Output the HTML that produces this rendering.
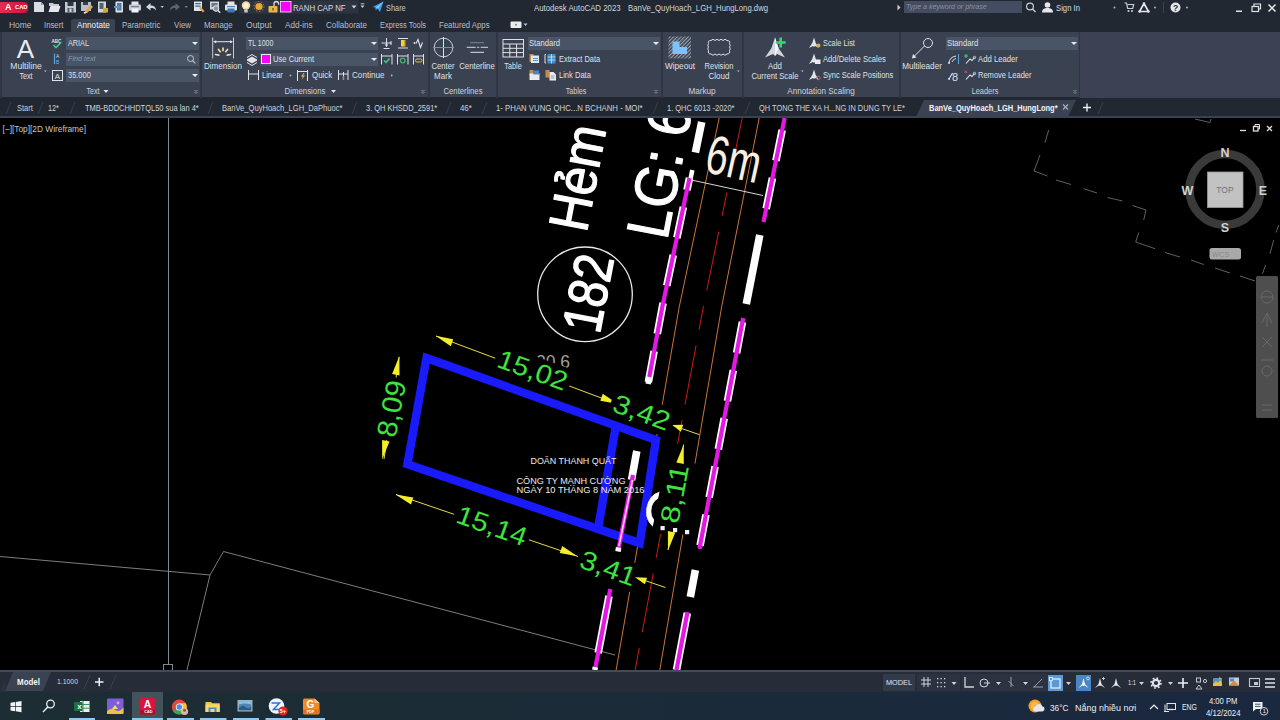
<!DOCTYPE html>
<html lang="vi">
<head>
<meta charset="utf-8">
<title>Autodesk AutoCAD 2023 - BanVe_QuyHoach_LGH_HungLong.dwg</title>
<style>
html,body{margin:0;padding:0;background:#000;}
body{width:1280px;height:720px;position:relative;overflow:hidden;font-family:"Liberation Sans",sans-serif;font-size:8.5px;color:#d4d8e0;}
.abs,.t,.b{position:absolute;}
.t{white-space:nowrap;line-height:10px;height:10px;}
.c{transform:translateX(-50%);text-align:center;}
#titlebar{left:0;top:0;width:1280px;height:17px;background:#222832;}
#menurow{left:0;top:17px;width:1280px;height:15px;background:#222832;}
#ribbon{left:0;top:32px;width:1280px;height:65.500px;background:#3a4151;}
.panel{position:absolute;top:32px;height:66px;background:#3b4252;}
.sep{position:absolute;top:32px;height:65.500px;width:2px;background:#2f3542;}
.dd{position:absolute;height:13px;background:#4a5467;}
.dd i{position:absolute;right:1.500px;top:5px;width:0;height:0;border-left:3px solid transparent;border-right:3px solid transparent;border-top:3px solid #e8ebf0;}
#filetabs{left:0;top:97px;width:1280px;height:20px;background:#222832;}
#canvas{left:0;top:118px;width:1280px;height:552px;background:#000;}
#statusbar{left:0;top:669.500px;width:1280px;height:22.500px;background:#262c38;border-top:2px solid #434b5b;box-sizing:border-box;}
#taskbar{left:0;top:692px;width:1280px;height:28px;background:linear-gradient(90deg,#1d2d34 0%,#1c2c35 30%,#1b2a3a 60%,#1a2840 100%);}
.mt{top:20px;font-size:8.5px;color:#b9bec9;}
.ft{top:102.500px;font-size:8.700px;color:#cfd3db;}
.pt{top:86px;font-size:8.5px;color:#d0d4dc;}
.lb{font-size:8.5px;color:#dfe2e8;}
.sl{position:absolute;width:1px;height:13px;background:#414857;transform:skewX(-25deg);top:101px;}
</style>
</head>
<body>
<!-- ===== TITLE BAR ===== -->
<div id="titlebar" class="abs"></div>
<div id="menurow" class="abs"></div>
<div id="ribbon" class="abs"></div>
<div id="filetabs" class="abs"></div>
<div id="canvas" class="abs"></div>
<div id="statusbar" class="abs"></div>
<div id="taskbar" class="abs"></div>
<!--TITLE-->
<div class="abs" style="left:0;top:1.500px;width:27.500px;height:11.500px;background:linear-gradient(90deg,#ea2a52,#c9143c);border-radius:0 4px 4px 0;"></div>
<div class="t" style="left:5px;top:2px;font-size:9px;line-height:10px;height:10px;font-weight:bold;color:#fff;">A</div>
<div class="t" style="left:15px;top:3.800px;font-size:5.800px;line-height:7px;height:7px;font-weight:bold;color:#fff;">CAD</div>
<svg class="abs" style="left:0;top:-.7px" width="420" height="17" viewBox="0 0 420 17">
 <!-- new -->
 <path d="M34 3h7l3 3v7h-10z" fill="#d9dce2"/><path d="M41 3v3h3" fill="#9aa0ab"/>
 <!-- open -->
 <path d="M49 4h4l1 1h5v2h-10z" fill="#c9ccd2"/><path d="M48.5 13l2-6h10l-2 6z" fill="#e4e6ea"/>
 <!-- save -->
 <rect x="65" y="3" width="11" height="10.5" fill="#c4c8cf"/><rect x="67.5" y="3" width="6" height="4" fill="#30363f"/><rect x="67.5" y="9" width="6" height="4.5" fill="#585f6b"/><rect x="69.5" y="9.5" width="2" height="3.5" fill="#d9dce2"/>
 <!-- saveas -->
 <rect x="81" y="3" width="10" height="9" fill="#b9bdc5"/><rect x="83" y="3" width="5" height="3" fill="#3a404a"/><path d="M85 12l6-6 2 2-6 6-3 .8z" fill="#e0a34c"/><path d="M84 13l3 .8-3.3.6z" fill="#fff"/>
 <!-- import -->
 <path d="M98 2.5h8v11h-8z" fill="#d0d3d9"/><rect x="99.500" y="4" width="4" height="6" fill="#59606c"/><rect x="103" y="9" width="5" height="4.500" fill="#d8a630"/>
 <!-- mobile -->
 <rect x="115.500" y="2.500" width="7.500" height="11" rx="1" fill="#dfe2e7"/><rect x="117" y="4" width="4.500" height="7.500" fill="#58798f"/><path d="M114 7h4v-1.500l2.500 2.500-2.500 2.500v-1.500h-4z" fill="#4c9ad6"/>
 <!-- print -->
 <rect x="131.500" y="2.500" width="7" height="4" fill="#e4e6ea"/><rect x="129" y="5.500" width="12" height="6" rx="1" fill="#c9ccd2"/><rect x="131.500" y="9.500" width="7" height="4" fill="#f2f3f5"/><rect x="131" y="7" width="8" height="1.200" fill="#5c87ab"/>
 <!-- undo -->
 <path d="M146 8l4.500-4v2.500c3.500 0 5.500 1.500 5.500 5-1.200-2-2.800-2.500-5.500-2.500v2.500z" fill="#d3d6dc"/>
 <path d="M160.500 7h3.400l-1.700 2z" fill="#c4c8cf"/>
 <!-- redo -->
 <path d="M180 8l-4.500-4v2.500c-3.500 0-5.500 1.500-5.500 5 1.200-2 2.800-2.500 5.500-2.500v2.500z" fill="#5d636f"/>
 <path d="M184.500 7h3.400l-1.700 2z" fill="#7a808c"/>
 <!-- batch plot -->
 <rect x="194" y="2.500" width="8" height="9.500" fill="#dfe2e7"/><rect x="195.200" y="4" width="5.500" height="1.300" fill="#4a6f94"/><rect x="195.200" y="6.500" width="5.500" height="1.300" fill="#4a6f94"/><path d="M199 9l4 4.500 1.500-1.500-4-4.500z" fill="#e0a34c"/>
 <!-- plot preview -->
 <rect x="210" y="2.500" width="9" height="8" fill="#d0d3d9"/><rect x="211.500" y="4" width="6" height="4" fill="#6e7785"/><circle cx="216" cy="9.500" r="2.800" fill="#8b94a3" stroke="#e6e8ec" stroke-width="1"/><path d="M218 11.500l2.200 2.200" stroke="#e6e8ec" stroke-width="1.400"/>
 <!-- plot -->
 <rect x="227.500" y="2.500" width="7" height="4" fill="#e4e6ea"/><rect x="225" y="5.500" width="12" height="6" rx="1" fill="#dde0e5"/><rect x="227.500" y="9.500" width="7" height="4" fill="#3d78b0"/><rect x="227" y="7" width="8" height="1.200" fill="#4e86b8"/>
 <rect x="239" y="1.500" width="119.500" height="13" fill="#2d3441"/>
 <!-- bulb -->
 <circle cx="246" cy="6.500" r="4.200" fill="#f2d8a0"/><circle cx="246" cy="6.500" r="2.500" fill="#fff3d0"/><rect x="244.300" y="10.500" width="3.400" height="3" fill="#c9ccd2"/>
 <!-- sun -->
 <circle cx="259" cy="7.500" r="3.600" fill="#eaa83a"/><circle cx="259" cy="7.500" r="5" fill="none" stroke="#b98733" stroke-width="1" stroke-dasharray="1.500 1.600"/>
 <!-- lock -->
 <rect x="268.500" y="7" width="9" height="6.500" rx=".8" fill="#e8b54a"/><path d="M274 7v-2.200a2.300 2.300 0 0 1 4.600 0v1" fill="none" stroke="#d8dbe0" stroke-width="1.300"/><rect x="272.300" y="9" width="1.500" height="2.500" fill="#7a5a1c"/>
 <!-- layer box -->
 
 <rect x="280.500" y="2.500" width="10.500" height="10.500" fill="#ff00ff" stroke="#e9e9ef" stroke-width=".8"/>
 <path d="M351.500 6.500h5l-2.500 3z" fill="#d0d3d9"/>
 <path d="M360.500 6.500h4l-2 2.500z" fill="#c4c8cf"/><rect x="360.700" y="4.300" width="3.600" height="1" fill="#c4c8cf"/>
 <!-- share -->
 <path d="M372.500 8l11-5.500-3.500 10.500-2.500-3.500-2 2v-3z" fill="#3a9be8"/><path d="M375.500 8.500l8-6-5.500 7z" fill="#8fc8f5"/>
</svg>
<div class="t" style="transform-origin:0 50%;transform:scaleX(0.914);left:293px;top:3px;font-size:8.500px;color:#d8dbe2;">RANH CAP NF</div>
<div class="t" style="transform-origin:0 50%;transform:scaleX(0.868);left:386px;top:3px;font-size:8.500px;color:#c5cad3;">Share</div>
<div class="t" style="transform-origin:0 50%;transform:scaleX(0.921);left:534px;top:3px;font-size:8.500px;color:#d3d6dd;">Autodesk AutoCAD 2023</div>
<div class="t" style="transform-origin:0 50%;transform:scaleX(0.909);left:628px;top:3px;font-size:8.500px;color:#d3d6dd;">BanVe_QuyHoach_LGH_HungLong.dwg</div>
<div class="abs" style="left:904px;top:1px;width:118px;height:12px;background:#434c60;"></div>
<div class="t" style="transform-origin:0 50%;transform:scaleX(0.877);left:906px;top:2px;font-size:8px;font-style:italic;color:#8a93a4;">Type a keyword or phrase</div>
<svg class="abs" style="left:890px;top:0" width="390" height="17" viewBox="890 0 390 17">
 <path d="M897.500 4.500v6l3-3z" fill="#c9ccd2"/>
 <circle cx="1030" cy="6.500" r="3.400" fill="none" stroke="#c9ccd2" stroke-width="1.200"/><path d="M1032.500 9l3 3" stroke="#c9ccd2" stroke-width="1.400"/>
 <circle cx="1047.500" cy="5" r="2.800" fill="#e4e6ea"/><path d="M1042 12.500c0-3.500 2.500-4.500 5.500-4.500s5.500 1 5.500 4.500z" fill="#e4e6ea"/>
 <circle cx="1114.500" cy="7.500" r="1" fill="#aeb3bd"/>
 <path d="M1124.500 3h2l1.200 5.500h5l1-4h-6" fill="none" stroke="#c9ccd2" stroke-width="1.200"/><circle cx="1128.500" cy="11" r="1.100" fill="#c9ccd2"/><circle cx="1132" cy="11" r="1.100" fill="#c9ccd2"/>
 <path d="M1144 3.500l4.500 8h-9z" fill="none" stroke="#e4e6ea" stroke-width="1.600" stroke-linejoin="round"/><circle cx="1144" cy="3.500" r="1.200" fill="#e4e6ea"/><circle cx="1139.500" cy="11.500" r="1.200" fill="#e4e6ea"/><circle cx="1148.500" cy="11.500" r="1.200" fill="#e4e6ea"/>
 <circle cx="1155" cy="7.500" r="1" fill="#aeb3bd"/>
 <rect x="1163" y="2" width="1" height="11" fill="#3b4250"/>
 <circle cx="1175.500" cy="7.500" r="5" fill="#e4e6ea"/>
 <circle cx="1187" cy="7.500" r="1" fill="#aeb3bd"/>
 <rect x="1236" y="10.500" width="6" height="1.500" fill="#dfe2e7"/>
 <rect x="1252" y="6.500" width="6.500" height="5" fill="none" stroke="#dfe2e7" stroke-width="1.200"/><path d="M1254 6v-2h6.500v5h-2" fill="none" stroke="#dfe2e7" stroke-width="1.200"/>
 <path d="M1268.500 4.500l7 7m0-7l-7 7" stroke="#e9ebee" stroke-width="1.500"/>
</svg>
<div class="t" style="left:1173px;top:3px;font-size:8.500px;font-weight:bold;color:#222832;">?</div>
<div class="t" style="transform-origin:0 50%;transform:scaleX(0.907);left:1056px;top:3px;font-size:8.500px;color:#d8dbe2;">Sign In</div>
<!--MENU-->
<div class="abs" style="left:71px;top:19px;width:44px;height:14px;background:#3b4252;border-radius:2px 2px 0 0;"></div>
<div class="t mt" style="transform-origin:0 50%;transform:scaleX(0.992);left:9px;">Home</div>
<div class="t mt" style="transform-origin:0 50%;transform:scaleX(0.912);left:44px;">Insert</div>
<div class="t mt" style="transform-origin:0 50%;transform:scaleX(0.964);left:77px;color:#f0f2f5;">Annotate</div>
<div class="t mt" style="transform-origin:0 50%;transform:scaleX(0.934);left:122px;">Parametric</div>
<div class="t mt" style="transform-origin:0 50%;transform:scaleX(0.930);left:174px;">View</div>
<div class="t mt" style="transform-origin:0 50%;transform:scaleX(0.931);left:204px;">Manage</div>
<div class="t mt" style="transform-origin:0 50%;transform:scaleX(1.003);left:246px;">Output</div>
<div class="t mt" style="transform-origin:0 50%;transform:scaleX(0.961);left:285px;">Add-ins</div>
<div class="t mt" style="transform-origin:0 50%;transform:scaleX(0.943);left:326px;">Collaborate</div>
<div class="t mt" style="transform-origin:0 50%;transform:scaleX(0.872);left:380px;">Express Tools</div>
<div class="t mt" style="transform-origin:0 50%;transform:scaleX(0.915);left:439px;">Featured Apps</div>
<svg class="abs" style="left:505px;top:17px" width="30" height="15" viewBox="505 17 30 15">
 <rect x="510.500" y="21.500" width="11" height="6.500" rx="1" fill="#e9ebee"/><circle cx="516" cy="24.700" r="1" fill="#7a808c"/>
 <path d="M523.500 23.500h4l-2 2.500z" fill="#c4c8cf"/>
</svg>
<!--RIBBON-->
<div class="abs" style="left:0;top:32px;width:2px;height:65.500px;background:#2f3542;"></div>
<div class="sep" style="left:200px;"></div>
<div class="sep" style="left:428px;"></div>
<div class="sep" style="left:496px;"></div>
<div class="sep" style="left:661px;"></div>
<div class="sep" style="left:742px;"></div>
<div class="sep" style="left:899px;"></div>
<div class="sep" style="left:1079px;width:1px;"></div>
<div class="abs" style="left:1080px;top:32px;width:200px;height:65.500px;background:#3c4254;"></div>
<!-- dropdowns -->
<div class="dd" style="left:66px;top:37px;width:133px;"><i></i></div>
<div class="dd" style="left:66px;top:53px;width:133px;"></div>
<div class="dd" style="left:66px;top:69px;width:133px;"><i></i></div>
<div class="dd" style="left:246px;top:37px;width:132px;"><i></i></div>
<div class="dd" style="left:260px;top:53px;width:118px;"><i></i></div>
<div class="dd" style="left:528px;top:37px;width:132px;"><i></i></div>
<div class="dd" style="left:946px;top:37px;width:132px;"><i></i></div>
<!-- TEXT panel -->
<div class="t" style="left:16.800px;top:34.600px;font-size:26px;line-height:28px;height:28px;color:#e9ebee;">A</div>
<div class="t lb c" style="transform:translateX(-50%) scaleX(1.004);left:26px;top:61px;">Multiline</div>
<div class="t lb c" style="transform:translateX(-50%) scaleX(0.840);left:26px;top:71px;">Text</div>
<div class="t lb" style="transform-origin:0 50%;transform:scaleX(0.854);left:68px;top:38px;">ARIAL</div>
<div class="t" style="transform-origin:0 50%;transform:scaleX(0.899);left:68px;top:54px;font-size:8px;font-style:italic;color:#8d96a6;">Find text</div>
<div class="t lb" style="transform-origin:0 50%;transform:scaleX(0.877);left:68px;top:70px;">35.000</div>
<div class="t pt c" style="transform:translateX(-50%) scaleX(0.834);left:93px;">Text</div>
<!-- DIMENSIONS panel -->
<div class="t lb c" style="transform:translateX(-50%) scaleX(0.946);left:223px;top:61px;">Dimension</div>
<div class="t lb" style="transform-origin:0 50%;transform:scaleX(0.819);left:248px;top:38px;">TL 1000</div>
<div class="abs" style="left:261px;top:54px;width:9.500px;height:9.500px;background:#ff00ff;border:.8px solid #e9e9ef;box-sizing:border-box;"></div>
<div class="t lb" style="transform-origin:0 50%;transform:scaleX(0.899);left:273px;top:54px;">Use Current</div>
<div class="t lb" style="transform-origin:0 50%;transform:scaleX(0.880);left:262px;top:70px;">Linear</div>
<div class="t lb" style="transform-origin:0 50%;transform:scaleX(0.934);left:312px;top:70px;">Quick</div>
<div class="t lb" style="transform-origin:0 50%;transform:scaleX(0.955);left:352px;top:70px;">Continue</div>
<div class="t pt c" style="transform:translateX(-50%) scaleX(0.923);left:305px;">Dimensions</div>
<!-- CENTERLINES -->
<div class="t lb c" style="transform:translateX(-50%) scaleX(0.901);left:443px;top:61px;">Center</div>
<div class="t lb c" style="transform:translateX(-50%) scaleX(0.942);left:443px;top:71px;">Mark</div>
<div class="t lb c" style="transform:translateX(-50%) scaleX(0.919);left:477px;top:61px;">Centerline</div>
<div class="t pt c" style="transform:translateX(-50%) scaleX(0.907);left:463px;">Centerlines</div>
<!-- TABLES -->
<div class="t lb c" style="transform:translateX(-50%) scaleX(0.856);left:513px;top:61px;">Table</div>
<div class="t lb" style="transform-origin:0 50%;transform:scaleX(0.899);left:529px;top:38px;">Standard</div>
<div class="t lb" style="transform-origin:0 50%;transform:scaleX(0.881);left:559px;top:54px;">Extract Data</div>
<div class="t lb" style="transform-origin:0 50%;transform:scaleX(0.888);left:559px;top:70px;">Link Data</div>
<div class="t pt c" style="transform:translateX(-50%) scaleX(0.838);left:576px;">Tables</div>
<!-- MARKUP -->
<div class="t lb c" style="transform:translateX(-50%) scaleX(0.962);left:680px;top:61px;">Wipeout</div>
<div class="t lb c" style="transform:translateX(-50%) scaleX(0.889);left:719px;top:61px;">Revision</div>
<div class="t lb c" style="transform:translateX(-50%) scaleX(0.945);left:719px;top:71px;">Cloud</div>
<div class="t pt c" style="transform:translateX(-50%) scaleX(0.960);left:702px;">Markup</div>
<!-- ANNOTATION SCALING -->
<div class="t lb c" style="transform:translateX(-50%) scaleX(0.926);left:775px;top:61px;">Add</div>
<div class="t lb c" style="transform:translateX(-50%) scaleX(0.902);left:775px;top:71px;">Current Scale</div>
<div class="t lb" style="transform-origin:0 50%;transform:scaleX(0.865);left:823px;top:38px;">Scale List</div>
<div class="t lb" style="transform-origin:0 50%;transform:scaleX(0.898);left:823px;top:54px;">Add/Delete Scales</div>
<div class="t lb" style="transform-origin:0 50%;transform:scaleX(0.886);left:823px;top:70px;">Sync Scale Positions</div>
<div class="t pt c" style="transform:translateX(-50%) scaleX(0.952);left:821px;">Annotation Scaling</div>
<!-- LEADERS -->
<div class="t lb c" style="transform:translateX(-50%) scaleX(0.955);left:922px;top:61px;">Multileader</div>
<div class="t lb" style="transform-origin:0 50%;transform:scaleX(0.910);left:947px;top:38px;">Standard</div>
<div class="t lb" style="transform-origin:0 50%;transform:scaleX(0.908);left:978px;top:54px;">Add Leader</div>
<div class="t lb" style="transform-origin:0 50%;transform:scaleX(0.885);left:978px;top:70px;">Remove Leader</div>
<div class="t pt c" style="transform:translateX(-50%) scaleX(0.869);left:985px;">Leaders</div>
<svg class="abs" style="left:0;top:32px" width="1280" height="66" viewBox="0 32 1280 66">
 <!-- text panel icons -->
 <text x="51.500" y="42.500" font-size="4.500" font-weight="bold" fill="#e4e6ea" font-family="Liberation Sans, sans-serif">ABC</text>
 <path d="M53.500 45l2.500 2.500 5-5" fill="none" stroke="#3fcf8e" stroke-width="1.600"/>
 <path d="M54.500 53.500v10.500" stroke="#5aa7e0" stroke-width="1.200"/><text x="56" y="58" font-size="5" fill="#c9d4e4" font-family="Liberation Sans, sans-serif">A</text><text x="56" y="63.500" font-size="5" fill="#6fb0e6" font-family="Liberation Sans, sans-serif">B</text>
 <rect x="52.500" y="70.500" width="10" height="10" fill="none" stroke="#dfe2e7" stroke-width="1"/><text x="54.700" y="79" font-size="8" fill="#dfe2e7" font-family="Liberation Sans, sans-serif">A</text>
 <circle cx="190.500" cy="58.500" r="3" fill="none" stroke="#c4c8cf" stroke-width="1"/><path d="M192.700 60.700l2.600 2.600" stroke="#c4c8cf" stroke-width="1.200"/>
 <path d="M44 70.500h2.600l-1.300 1.600z" fill="#c4c8cf"/>
 <path d="M103.500 90h5l-2.500 3z" fill="#e4e6ea"/>
 <path d="M194.500 90l1.500 1.500 1.500-1.500M194.500 92l1.500 1.500 1.500-1.500" fill="none" stroke="#9aa0ab" stroke-width=".8"/>
 <!-- dimension big icon -->
 <path d="M212.700 37.500v21M233.500 37.500v21" stroke="#c9ccd2" stroke-width="1"/>
 <path d="M214 41.700h18" stroke="#e4e6ea" stroke-width="1"/><path d="M213.200 41.700l3-1.500v3zM233 41.700l-3-1.500v3z" fill="#e4e6ea"/>
 <g stroke="#e9dfa6" stroke-width="1.700" stroke-linecap="round"><path d="M223 48v2.500M218.500 49.500l1.800 2.200M227.500 49.500l-1.800 2.200M215.500 54.500l3.300.6M230.500 54.500l-3.300.6"/></g>
 <!-- layers icon -->
 <path d="M247 60l5-3 5 3-5 3zM247 62.500l5 3 5-3M247 57.500l5-3 5 3" fill="none" stroke="#e4e6ea" stroke-width="1"/><path d="M247 60l5-3 5 3-5 3z" fill="#e4e6ea"/>
 <!-- linear -->
 <path d="M248.500 70v10M258.500 70v10M248.500 74h10" stroke="#dfe2e7" stroke-width="1"/>
 <circle cx="290.500" cy="75.500" r=".9" fill="#aeb3bd"/>
 <!-- quick -->
 <path d="M297.500 70v11M307.500 70v11M297.500 71.500h10" stroke="#dfe2e7" stroke-width="1"/><path d="M303.500 73l-2.500 3.500h2l-1.500 3.500 3.500-4.500h-2l1.500-2.500z" fill="#f0b45a"/>
 <!-- continue -->
 <path d="M338.500 70v10M343.500 72v8M348 70v10M338.500 74h9.500" stroke="#dfe2e7" stroke-width="1"/><path d="M343.500 76v4" stroke="#8d96a6" stroke-width="1.500"/>
 <circle cx="391.700" cy="75.500" r=".9" fill="#aeb3bd"/>
 <!-- small dim icons row1 -->
 <path d="M381.500 43h10M386.500 38v8.500M383.500 48.500h6" stroke="#dfe2e7" stroke-width="1"/><path d="M386.500 47l-1.800-2.500h3.600z" fill="#dfe2e7"/><path d="M391 41v4" stroke="#dfe2e7" stroke-width="1"/>
 <path d="M398 38.500h10M398 48h10" stroke="#dfe2e7" stroke-width="1.200"/><rect x="401" y="40" width="3.800" height="6.500" fill="#f2d23a"/><rect x="404" y="40" width="1.500" height="6.500" fill="#c9a227"/>
 <circle cx="414.500" cy="43" r="1" fill="#dfe2e7"/><path d="M416 43.500l2-4 2.500 8 2-5" fill="none" stroke="#dfe2e7" stroke-width="1.100"/>
 <!-- row2 -->
 <path d="M381.500 54v10.500M392 54v10.500M381.500 56h10.500" stroke="#dfe2e7" stroke-width="1"/><path d="M384 60.500l2 2 3.500-4" fill="none" stroke="#3fcf8e" stroke-width="1.500"/>
 <path d="M397.500 54v10.500M408 54v10.500M397.500 56h10.500" stroke="#dfe2e7" stroke-width="1"/><circle cx="402.700" cy="60.500" r="2.300" fill="none" stroke="#45b36b" stroke-width="1.300"/>
 <path d="M413.500 54v10.500M423.500 54v10.500M413.500 56h10" stroke="#dfe2e7" stroke-width="1"/><rect x="415.500" y="59" width="6.500" height="3" rx="1.500" fill="none" stroke="#e0c24a" stroke-width="1"/>
 <path d="M331 90h5l-2.500 3z" fill="#e4e6ea"/>
 <path d="M421.500 90l1.500 1.500 1.500-1.500M421.500 92l1.500 1.500 1.500-1.500" fill="none" stroke="#9aa0ab" stroke-width=".8"/>
 <!-- center mark -->
 <circle cx="443.500" cy="47.500" r="9.300" fill="none" stroke="#c9ccd2" stroke-width="1"/><path d="M443.500 37v21" stroke="#dfe2e7" stroke-width="1"/><path d="M433 47.500h21" stroke="#3fa9c9" stroke-width="1"/>
 <!-- centerline -->
 <path d="M470 42.700h14" stroke="#7a8394" stroke-width="1"/><path d="M466.700 47.300h21.300" stroke="#bfe3ee" stroke-width="1" stroke-dasharray="9 1.500 2 1.500"/><path d="M470.500 52.300h13.500" stroke="#dfe2e7" stroke-width="1"/>
 <!-- table -->
 <g stroke="#dfe2e7" stroke-width="1" fill="none"><rect x="503" y="39.500" width="20.500" height="17.500"/><path d="M503 44h20.500M503 48.300h20.500M503 52.600h20.500M509.800 44v13M516.600 44v13"/></g>
 <!-- tables small icons -->
 <rect x="529.500" y="54" width="4" height="8" fill="#c78a4a"/><rect x="531" y="55.500" width="8" height="7.500" fill="#e4e6ea"/><rect x="533" y="58" width="5" height="1" fill="#5a8fc4"/><rect x="533" y="60" width="5" height="1" fill="#5a8fc4"/>
 <path d="M546 54.500h-1v8.500h1" fill="none" stroke="#e4e6ea" stroke-width="1"/><rect x="547.500" y="54" width="8" height="9.500" fill="#3f8fd0"/><path d="M547.500 57h8M547.500 60h8M551.500 54v9.500" stroke="#cfe4f5" stroke-width=".8"/>
 <rect x="529.500" y="70" width="4" height="5" fill="#c78a4a"/><rect x="529.500" y="73.500" width="10" height="6.500" fill="#e9ebee"/><rect x="533.500" y="70.500" width="5.500" height="4" fill="#4a86c5"/>
 <rect x="545.500" y="70" width="4" height="7.500" fill="#c78a4a"/><path d="M549.500 72h4l2.500 2.500v6h-6.500z" fill="#e9ebee"/><path d="M551 76h3.500M551 78h3.500" stroke="#7a8394" stroke-width=".8"/>
 <path d="M654.500 90l1.500 1.500 1.500-1.500M654.500 92l1.500 1.500 1.500-1.500" fill="none" stroke="#9aa0ab" stroke-width=".8"/>
 <!-- wipeout -->
 <defs><pattern id="hat" width="2.600" height="2.600" patternUnits="userSpaceOnUse" patternTransform="rotate(-45)"><rect width="2.600" height="1.100" fill="#9aa0ab"/></pattern></defs>
 <rect x="668.500" y="36.500" width="22.500" height="22" fill="url(#hat)"/>
 <path d="M672.500 41.500h7v5.500h7.500v7h-14.500z" fill="#7cc4f5"/>
 <!-- revision cloud -->
 <path d="M711 40.500q2-2.500 4 0q2-2.500 4 0q2-2.500 4 0q2-2.500 4 0q3.500 0 2.500 3q1.500 2 0 3.500q1.500 2 0 3.500q1 3.500-2.500 3.500q-2 2.500-4 0q-2 2.500-4 0q-2 2.500-4 0q-2 2.500-4 0q-3.500 0-2.500-3.500q-1.500-1.500 0-3.500q-1.500-1.500 0-3.500q-1-3 2.500-3z" fill="none" stroke="#dfe2e7" stroke-width="1"/>
 <path d="M737 70.500h2.600l-1.300 1.600z" fill="#c4c8cf"/>
 <!-- add current scale -->
 <path d="M775 37.500L778.500 48L785 57.500L777 54L775 56L773 54L765 57.500L771.500 48Z" fill="#d3d6dc"/><path d="M775 37.500L778.500 48L775 56Z" fill="#f5f6f8"/>
 <path d="M780.700 37.500v10M775.700 42.500h10" stroke="#3fd07a" stroke-width="2.600"/>
 <path d="M801 70.500h2.600l-1.300 1.600z" fill="#c4c8cf"/>
 <!-- small annotation icons -->
 <path d="M814 37.500l1.800 5.500 3.200 5-4-2-1 1-1-1-4 2 3.200-5z" fill="#dfe2e7"/><circle cx="818.500" cy="45.500" r="2" fill="#e0a840"/>
 <path d="M814 53.500l1.800 5.500 3.200 5-4-2-1 1-1-1-4 2 3.200-5z" fill="#dfe2e7"/><rect x="815" y="59.500" width="5.500" height="4.500" fill="#e9ebee"/>
 <path d="M814 69.500l1.800 5.500 3.200 5-4-2-1 1-1-1-4 2 3.200-5z" fill="#dfe2e7"/><circle cx="818.500" cy="78" r="1.800" fill="none" stroke="#b5606a" stroke-width=".9"/>
 <!-- multileader -->
 <circle cx="928" cy="43" r="4.500" fill="none" stroke="#dfe2e7" stroke-width="1"/><path d="M924.500 46l-11 11" stroke="#dfe2e7" stroke-width="1"/><path d="M912 58.500l1-4.500 3.500 3.500z" fill="#dfe2e7"/>
 <!-- leader small icons -->
 <path d="M949 63q.5-6 7-7" fill="none" stroke="#dfe2e7" stroke-width="1"/><circle cx="949" cy="63" r="1" fill="#dfe2e7"/><path d="M952 62q1-3 4-3.500" fill="none" stroke="#dfe2e7" stroke-width=".9"/><path d="M958.500 54v10" stroke="#5aa7e0" stroke-width="1"/>
 <path d="M966 54v4M964 56h4" stroke="#3fd07a" stroke-width="1.100"/><path d="M966 63.500l4-4.500 2 1.500 2.500-3" fill="none" stroke="#dfe2e7" stroke-width="1.100"/><circle cx="974.500" cy="57.500" r="1.200" fill="none" stroke="#dfe2e7" stroke-width=".8"/>
 <path d="M949 79l3.500-6" stroke="#dfe2e7" stroke-width="1.100"/><circle cx="949" cy="79" r="1" fill="#dfe2e7"/><text x="952" y="80.500" font-size="11" fill="#dfe2e7" font-family="Liberation Sans, sans-serif">8</text>
 <path d="M964.500 70.500l2.500 2.500m0-2.500l-2.500 2.500" stroke="#d0506a" stroke-width="1"/><path d="M966 79.500l4-4.500 2 1.500 2.500-3" fill="none" stroke="#dfe2e7" stroke-width="1.100"/><circle cx="974.500" cy="73.500" r="1.200" fill="none" stroke="#dfe2e7" stroke-width=".8"/>
 <path d="M1073.500 90l1.500 1.500 1.500-1.500M1073.500 92l1.500 1.500 1.500-1.500" fill="none" stroke="#9aa0ab" stroke-width=".8"/>
</svg>
<!--FILETABS-->
<div class="abs" style="left:0;top:116px;width:1280px;height:2px;background:#3a4150;"></div>
<svg class="abs" style="left:0;top:98px" width="1280" height="20" viewBox="0 98 1280 20">
 <path d="M916 117l8-17h152l-8 17z" fill="#3b4252"/>
 <g stroke="#383f4d" stroke-width="1">
  <path d="M6 114l5-12M38 114l5-12M70 114l5-12M208 114l5-12M352 114l5-12M446 114l5-12M482 114l5-12M653 114l5-12M745 114l5-12M1098 114l5-12"/>
 </g>
 <path d="M1063 104.500l5 5m0-5l-5 5" stroke="#aeb3bd" stroke-width="1.100"/>
 <path d="M1083 107.500h8m-4-4v8" stroke="#eef0f3" stroke-width="1.400"/>
</svg>
<div class="t ft" style="transform-origin:0 50%;transform:scaleX(0.861);left:17px;">Start</div>
<div class="t ft" style="transform-origin:0 50%;transform:scaleX(0.835);left:48px;">12*</div>
<div class="t ft" style="transform-origin:0 50%;transform:scaleX(0.860);left:85px;">TMB-BDDCHHDTQL50 sua lan 4*</div>
<div class="t ft" style="transform-origin:0 50%;transform:scaleX(0.872);left:222px;">BanVe_QuyHoach_LGH_DaPhuoc*</div>
<div class="t ft" style="transform-origin:0 50%;transform:scaleX(0.857);left:366px;">3. QH KHSDD_2591*</div>
<div class="t ft" style="transform-origin:0 50%;transform:scaleX(0.904);left:460px;">46*</div>
<div class="t ft" style="transform-origin:0 50%;transform:scaleX(0.896);left:496px;">1- PHAN VUNG QHC...N BCHANH - MOI*</div>
<div class="t ft" style="transform-origin:0 50%;transform:scaleX(0.857);left:667px;">1. QHC 6013 -2020*</div>
<div class="t ft" style="transform-origin:0 50%;transform:scaleX(0.853);left:759px;">QH TONG THE XA H...NG IN DUNG TY LE*</div>
<div class="t ft" style="transform-origin:0 50%;transform:scaleX(0.859);left:929px;font-weight:bold;color:#f3f4f6;">BanVe_QuyHoach_LGH_HungLong*</div>
<!--DRAWING-->
<svg class="abs" style="left:0;top:118px" width="1280" height="552" viewBox="0 118 1280 552" font-family="Liberation Sans, sans-serif">
 <!-- faint parcel lines -->
 <g stroke="#7d7d7d" stroke-width="1" fill="none">
  <path d="M0 556.500L210 575L223.500 551.500L615 655"/>
  <path d="M210 575L187 670"/>
 </g>
 <!-- dashed gray boundary top right -->
 <g stroke="#606060" stroke-width="1" fill="none">
  <path d="M1195 119l15 3.500 1-3.500M1048.700 130l-3.700 12.500M1040 155l-6 16l13.500 5M1056 180l15 4.500M1083.700 188.700l13.300 4.300M1107.500 197.500l15 3.500M1132.500 205.500l13.500 4.500l-2.300 10M1138.700 232.500l-3 9.500l19.300 6.700M1165 252.500l15 4.500M1191 260l12.700 4.500M1215 268l15 5M1240 276l15 5M1278.700 225l-2.700 7.500M1273.700 240l-3.700 13.700M1265.500 265l-3 8.700"/>
 </g>
 <!-- crosshair -->
 <path d="M168.500 118v546" stroke="#7c8b90" stroke-width="1"/>
 <rect x="163.500" y="664.500" width="9" height="7" fill="none" stroke="#7c8b90" stroke-width="1"/>
 <!-- road: orange / red thin lines -->
 <g fill="none" stroke-width="1">
  <path d="M719.200 118L679 308L616 670.600" stroke="#c9743a"/>
  <path d="M759.200 118L721.800 306L659.700 670.600" stroke="#c9743a"/>
  <path d="M742.200 118L703.500 306L635 670.600" stroke="#d01818" stroke-dasharray="60 16 24 16"/>
 </g>
 <!-- 6m dim line -->
 <path d="M692.800 180.300L763 195.500" stroke="#d6d6d6" stroke-width="1"/>
 <circle cx="585" cy="294.300" r="47.300" fill="none" stroke="#e8e8e8" stroke-width="1.300"/>
 <text x="536" y="367.500" font-size="17.500" fill="#a0a0a0">20.6</text>
 <!-- blue parcel -->
 <g fill="none" stroke="#1a1aff" stroke-width="8.400" stroke-linejoin="miter">
  <path d="M426.500 358L656 440L639.700 543.100L407.400 464.300Z"/>
  <path d="M616 425.500L598 528.500"/>
 </g>
 <!-- white underlay dashes + pure white bars -->
 <g stroke="#ffffff" stroke-width="7.600" fill="none">
  <path d="M689.500 178L662.500 306L648.200 383" stroke-dasharray="31.500 17.500" stroke-dashoffset="19.300"/>
  <path d="M609 596L598.200 653"/>
  <path d="M784.600 118L763.500 222" stroke-dasharray="31.500 17.500" stroke-dashoffset="36.800"/>
  <path d="M743.200 318L700 546" stroke-dasharray="31.500 17.500" stroke-dashoffset="44.900"/>
  <path d="M687.300 613L676.500 670"/>
  <path d="M701.700 122L695.400 152.500"/>
  <path d="M692.300 170L690.500 179" stroke-width="4.500"/>
  <path d="M759.800 235L746.300 304"/>
  <path d="M649.800 375L648.200 384" stroke-width="5.500"/>
  <path d="M636.800 451L631.500 480"/>
  <path d="M695.400 570L690.300 597"/>
 </g>
 <!-- magenta lines -->
 <g fill="none" stroke="#e318e3" stroke-width="4.200">
  <path d="M689.500 178L662.500 306L649.300 377"/>
  <path d="M633 475L618.500 549"/>
  <path d="M610.300 589L595.500 667"/>
  <path d="M784.600 118L763.500 222"/>
  <path d="M743.200 318L700 546"/>
  <path d="M687.500 612L676.500 670"/>
 </g>
 <path d="M632.500 480L619 546" fill="none" stroke="#f9d2f5" stroke-width="1.600"/>
 <g stroke="#ffffff" fill="none" stroke-width="5.500">
  <path d="M618.600 547.500L618 551.500"/>
  <path d="M595.300 667L594.800 670"/>
 </g>
 <circle cx="700" cy="546.500" r="2.600" fill="#e318e3"/>
 <!-- big white texts -->
 <defs><clipPath id="c6"><rect x="-8" y="-52" width="62" height="21"/></clipPath></defs>
 <g fill="#ffffff" stroke="#ffffff" stroke-width="1.100" stroke-linejoin="round">
  <text transform="translate(586.500 233.500) rotate(-79.200) scale(.9 1)" font-size="56">Hẻm</text>
  <text transform="translate(667 241) rotate(-79.200) scale(.917 1)" font-size="60">LG: 6</text>
  <text transform="translate(599.500 335) rotate(-79.200) scale(.85 1)" font-size="55" stroke-width="1.300">182</text>
  <text transform="translate(682.500 537) rotate(-79.200)" font-size="58" stroke-width=".5" clip-path="url(#c6)">O</text>
 </g>
 <text transform="translate(703 171.500) rotate(12.500) scale(.72 1)" font-size="55" fill="#f6efe2">6m</text>
 <!-- dimension lines yellow -->
 <g stroke="#e6d94a" stroke-width="1" fill="none">
  <path d="M436 336L612 402"/>
  <path d="M673 425.500L699.500 434.700"/>
  <path d="M396 494.500L578 556.500"/>
  <path d="M636 577.500L665.500 587.500"/>
  <path d="M399 357L384 459"/>
  <path d="M683.500 444.500L668 550"/>
 </g>
 <path d="M618 404L600.300 400.700L602.700 393.700Z" fill="#f4ee2a"/>
 <!-- masks behind dim text -->
 <g fill="#000000">
  <rect transform="translate(495.500 366.500) rotate(19.700)" x="-3" y="-23" width="79" height="29"/>
  <rect transform="translate(611 411) rotate(19.700)" x="-3" y="-23" width="66" height="29"/>
  <rect transform="translate(454.500 522) rotate(19.700)" x="-3" y="-23" width="79" height="29"/>
  <rect transform="translate(578 567) rotate(19.700)" x="-3" y="-23" width="63" height="29"/>
  <rect transform="translate(395.500 438.500) rotate(-79.200)" x="-3" y="-24" width="63" height="29"/>
  <rect transform="translate(678 524.500) rotate(-79.200)" x="-9" y="-24" width="72" height="40"/>
 </g>
 <!-- arrowheads -->
 <g fill="#f4ee2a">
  <path d="M435.500 335.800L453.200 339.200L450.800 346.200Z"/>
  <path d="M672.500 425L683.250 424.800L680.750 431.800Z"/>
  <path d="M395.500 494.500L413.300 497.500L411 504.500Z"/>
  <path d="M577.500 556.300L559.800 553L562.200 546Z"/>
  <path d="M635 577.300L647.100 577.700L644.900 584.300Z"/>
  <path d="M399.400 356L399.500 375.400L392.100 374Z"/>
  <path d="M382.200 459.500L382.100 440.100L389.500 441.500Z"/>
  <path d="M683.700 444.500L683.800 463.900L676.400 462.500Z"/>
  <path d="M668 550.500L667.900 531.100L675.300 532.500Z"/>
 </g>
 <!-- dimension texts green -->
 <g fill="#3fe23f" font-size="26.500">
  <text transform="translate(495.500 366.500) rotate(19.700) scale(1.09 1)">15,02</text>
  <text transform="translate(611 411) rotate(19.700) scale(1.14 1)">3,42</text>
  <text transform="translate(454.500 522) rotate(19.700) scale(1.10 1)">15,14</text>
  <text transform="translate(578 567) rotate(19.700) scale(1.12 1)">3,41</text>
  <text transform="translate(395.500 438.500) rotate(-79.200)" font-size="28" textLength="57" lengthAdjust="spacingAndGlyphs">8,09</text>
  <text transform="translate(678 524.500) rotate(-79.200)" font-size="26.500" textLength="59" lengthAdjust="spacingAndGlyphs">8,11</text>
 </g>
 <!-- small white marks -->
 <g fill="#f2f2f2"><rect x="660.500" y="526" width="4.200" height="4.200"/><rect x="673" y="528" width="4.200" height="4.200"/><rect x="685" y="530" width="4.200" height="4.200"/></g>
 <!-- owner text -->
 <g fill="#ececec" font-size="9.500">
  <text x="530.500" y="464" textLength="86" lengthAdjust="spacingAndGlyphs">DOÃN THANH QUẤT</text>
  <text x="516.500" y="483.500" textLength="109" lengthAdjust="spacingAndGlyphs">CÔNG TY MẠNH CƯỜNG</text>
  <text x="516.500" y="492.500" textLength="128" lengthAdjust="spacingAndGlyphs">NGÀY 10 THÁNG 8 NĂM 2016</text>
 </g>
 <!-- viewport label -->
 <text x="2.500" y="131.500" font-size="8.700" fill="#c9c9c9" textLength="83.500" lengthAdjust="spacingAndGlyphs">[−][Top][2D Wireframe]</text>
 <!-- viewport controls -->
 <g stroke="#e0e0e0" stroke-width="1.300" fill="none"><path d="M1240 130.500h6"/><rect x="1253.500" y="126.500" width="4.500" height="4.500"/><path d="M1255 126v-1.500h4.500v4.500h-1.500" stroke-width="1"/><path d="M1267 126l5 5m0-5l-5 5"/></g>
 <!-- viewcube -->
 <circle cx="1225" cy="189.500" r="35.500" fill="none" stroke="#3a3a3a" stroke-width="8.500"/>
 <rect x="1207.500" y="172" width="35.500" height="35.500" fill="#c2c2c2" stroke="#9a9a9a" stroke-width=".8"/>
 <text x="1225" y="193" font-size="8.500" fill="#6f747a" text-anchor="middle">TOP</text>
 <g font-size="12.500" font-weight="bold" fill="#d2d2d2" text-anchor="middle">
  <text x="1225" y="157">N</text><text x="1225" y="232">S</text><text x="1187.500" y="194.500">W</text><text x="1263" y="194.500">E</text>
 </g>
 <rect x="1209.500" y="248" width="31.500" height="11.500" rx="2.500" fill="#a9a9a9"/>
 <text x="1212" y="257" font-size="7.500" fill="#8a8a8a">WCS</text>
 <!-- navbar -->
 <rect x="1256" y="276" width="22" height="142" rx="1.500" fill="#565656" opacity=".9"/>
 <g stroke="#686868" stroke-width="1" fill="none"><circle cx="1267" cy="297" r="6"/><path d="M1261 297h12M1267 313v14M1262 323l5-10 5 10M1262 337l10 10M1262 347l10-10M1261 360h12M1262 405h10M1262 410h10"/><circle cx="1267" cy="371" r="5"/></g>
</svg>
<!--STATUS-->
<svg class="abs" style="left:0;top:670px" width="1280" height="22" viewBox="0 670 1280 22">
 <path d="M5 691l8-19h38l-8 19z" fill="#3b4252"/>
 <path d="M0 691l5-12v12z" fill="#2c323e"/>
 <g stroke="#3a4150" stroke-width="1"><path d="M84 689l6-14M110 689l6-14"/></g>
 <path d="M95 682h8.500m-4.250-4.250v8.500" stroke="#f0f2f5" stroke-width="1.500"/>
 <!-- right status icons -->
 <rect x="883" y="674" width="32" height="17" fill="#333a48"/>
 <rect x="917" y="674" width="43" height="17" fill="#2c323f"/>
 <rect x="962" y="674" width="86" height="17" fill="#2c323f"/>
 <g stroke="#cfd3da" stroke-width="1" fill="none">
  <path d="M921 680h10M921 684h10M924 677v10M928 677v10"/>
  <path d="M965 677v10h9" stroke-width="1.300"/>
  <circle cx="984" cy="683" r="4"/><path d="M984 683h6"/>
  <path d="M1011 677v10M1008.500 681l5 5" stroke="#9aa0ab"/>
  <path d="M1033 687h10M1034 687l8-8" stroke="#9aa0ab"/>
 </g>
 <g fill="#cfd3da">
  <rect x="937" y="678" width="1.300" height="1.300"/><rect x="940.500" y="678" width="1.300" height="1.300"/><rect x="944" y="678" width="1.300" height="1.300"/>
  <rect x="937" y="682" width="1.300" height="1.300"/><rect x="940.500" y="682" width="1.300" height="1.300"/><rect x="944" y="682" width="1.300" height="1.300"/>
  <rect x="937" y="686" width="1.300" height="1.300"/><rect x="940.500" y="686" width="1.300" height="1.300"/><rect x="944" y="686" width="1.300" height="1.300"/>
  <path d="M951.500 682h5l-2.500 3z"/><path d="M996 682h5l-2.500 3z"/><path d="M1023 682h5l-2.500 3z"/><path d="M1066 682h5l-2.500 3z"/><path d="M1139 682h5l-2.500 3z"/><path d="M1168 682h5l-2.500 3z"/>
 </g>
 <rect x="1048" y="675" width="15" height="16" fill="#5a9ad6"/>
 <rect x="1051" y="679" width="9" height="9" fill="none" stroke="#eef2f7" stroke-width="1.200"/><rect x="1049.500" y="677.500" width="3" height="3" fill="#5a9ad6" stroke="#eef2f7" stroke-width=".8"/>
 <rect x="1076" y="675" width="15" height="16" fill="#4a86c5"/>
 <path d="M1083.500 678l1.500 6 3.500 4-4-2.500-1 .5-1-.5-4 2.500 3.500-4z" fill="#f2f4f7"/><circle cx="1088" cy="678.500" r="1.400" fill="none" stroke="#f2f4f7" stroke-width=".7"/>
 <path d="M1100 678l1.500 6 3.500 4-4-2.500-1 .5-1-.5-4 2.500 3.500-4z" fill="#e4e7ec"/><path d="M1103.500 677v3m-1.500-1.500h3" stroke="#e4e7ec" stroke-width=".8"/>
 <path d="M1116 678l1.500 6 3.500 4-4-2.500-1 .5-1-.5-4 2.500 3.500-4z" fill="#e4e7ec"/>
 <circle cx="1156" cy="683" r="3.200" fill="none" stroke="#dfe2e7" stroke-width="2.200"/><circle cx="1156" cy="683" r="5" fill="none" stroke="#dfe2e7" stroke-width="1.600" stroke-dasharray="1.800 2.100"/>
 <path d="M1178 683h10m-5-5v10" stroke="#eef0f3" stroke-width="1.600"/>
 <g stroke="#c4c8cf" stroke-width="1" fill="none"><rect x="1196.500" y="678" width="4" height="4"/><circle cx="1205" cy="681" r="1.600"/><path d="M1199 685l3 4h-6z"/></g>
 <rect x="1213" y="678" width="9" height="8" rx="1" fill="#5b8fc2"/><path d="M1213 684l3-3 2 2 2-3 2 3v3h-9z" fill="#e4c14a"/><path d="M1219 677l3 1.500-3 1.500z" fill="#7fc66a"/>
 <rect x="1229" y="677.500" width="10" height="8" fill="#c9ccd2"/><path d="M1229 685.500l5-5 5 5z" fill="#d98b4a"/><rect x="1230" y="678.500" width="4" height="3" fill="#5b8fc2"/>
 <rect x="1249.500" y="678.500" width="10" height="8" fill="none" stroke="#c4c8cf" stroke-width="1.100"/><rect x="1254" y="682" width="4" height="3" fill="#c4c8cf"/>
 <path d="M1265 679h10M1265 683h10M1265 687h10" stroke="#dfe2e7" stroke-width="1.400"/>
</svg>
<div class="t" style="transform-origin:0 50%;transform:scaleX(0.936);left:17px;top:677px;font-size:8.500px;font-weight:bold;color:#f3f4f6;">Model</div>
<div class="t" style="transform-origin:0 50%;transform:scaleX(0.858);left:57px;top:677px;font-size:8px;color:#d3d6dd;">1.1000</div>
<div class="t" style="transform-origin:0 50%;transform:scaleX(0.914);left:886px;top:678px;font-size:8px;color:#e4e6ea;">MODEL</div>
<div class="t" style="transform-origin:0 50%;transform:scaleX(0.766);left:1128px;top:678px;font-size:7.500px;color:#dfe2e7;">1:1</div>
<!--TASKBAR-->
<svg class="abs" style="left:0;top:692px" width="1280" height="28" viewBox="0 692 1280 28">
 <rect x="132" y="692" width="31" height="28" fill="#43535c"/>
 <!-- start -->
 <g fill="#f2f4f6"><path d="M10.500 702.800l4.500-.7v4.200h-4.500zM15.700 702l5.800-.9v5.200h-5.800zM10.500 707h4.500v4.200l-4.500-.7zM15.700 707h5.800v5.200l-5.800-.9z"/></g>
 <!-- search -->
 <circle cx="50.500" cy="704" r="3.800" fill="none" stroke="#eef0f2" stroke-width="1.300"/><path d="M47.800 707l-4.800 5" stroke="#eef0f2" stroke-width="1.400"/>
 <!-- excel -->
 <rect x="80" y="701" width="9.500" height="11" fill="#e9f1ec"/><path d="M83 701v11M80 704.500h9.500M80 708.200h9.500" stroke="#2a8a55" stroke-width=".9"/><rect x="74" y="702" width="8.500" height="9" fill="#1d7044"/>
 <!-- purple app -->
 <rect x="107" y="698.500" width="16.500" height="15.500" rx="1" fill="#7c5fd8"/><path d="M107 711.500c3-3 5.500-3.500 8.500-1.500s5 .5 8-2.500v5.500a1 1 0 0 1-1 1h-14.500a1 1 0 0 1-1-1z" fill="#e9c24c"/><circle cx="118" cy="703" r="1.400" fill="#f4a0c8"/><path d="M112 709l3-4 3 4z" fill="#f0d77a"/>
 <!-- autocad -->
 <rect x="140" y="697.500" width="15" height="17" rx="1.500" fill="#d8143e"/><rect x="140" y="710" width="15" height="4.500" fill="#a80f30"/>
 <!-- chrome -->
 <circle cx="179.300" cy="707" r="7.500" fill="#de4b3c"/><path d="M179.300 707l-6.500 3.750a7.500 7.500 0 0 0 6.500 3.750a7.500 7.500 0 0 0 3.250-.75z" fill="#3fa45a"/><path d="M179.300 707l3.250 6.750a7.500 7.500 0 0 0 4.250-6.750a7.500 7.500 0 0 0-1-3.750h-6.500z" fill="#f2c23a"/><circle cx="179.300" cy="707" r="3.500" fill="#f4f6f8"/><circle cx="179.300" cy="707" r="2.700" fill="#4a8be8"/><circle cx="184.500" cy="711.500" r="3.600" fill="#d9b9a0"/><circle cx="184.500" cy="710.300" r="1.500" fill="#8a5a44"/>
 <!-- explorer -->
 <path d="M205.500 702h5.500l1.200 1.200h7.500v8.800h-14.200z" fill="#f2c744"/><rect x="205.500" y="704.500" width="14.200" height="7.500" fill="#f7d867"/><rect x="208.500" y="707.500" width="8" height="4.500" fill="#3d8fd6"/><rect x="210.500" y="709" width="4" height="3" fill="#f7d867"/>
 <!-- photos -->
 <rect x="237.500" y="700" width="15" height="11.500" fill="#9fb8c8"/><rect x="238.800" y="701.300" width="12.400" height="8.900" fill="#4d86b4"/><path d="M238.800 708c3-2.500 5-2.500 7-.8s3.500 1 5.400-.8v3.800h-12.400z" fill="#2e5d84"/><path d="M238.800 704.500c3-1.500 8-1.500 12.400 0v-3.200h-12.400z" fill="#8fc0e0"/>
 <!-- zalo -->
 <circle cx="276.500" cy="706" r="7.800" fill="#f2f6fa"/><path d="M271.500 703h8l-6 6.500h7" fill="none" stroke="#2a74d8" stroke-width="1.500"/><circle cx="283" cy="711" r="4.600" fill="#e0262c"/>
 <!-- orange app -->
 <path d="M303 700a1.500 1.500 0 0 1 1.500-1.500h10l5 4.500v10a1.500 1.500 0 0 1-1.500 1.500h-13.500a1.500 1.500 0 0 1-1.500-1.500z" fill="#f08a24"/><path d="M314.500 698.500l5 4.500h-5z" fill="#f9c48a"/><rect x="303" y="709.500" width="16.500" height="4" fill="#e0701a"/>
 <!-- running indicators -->
 <g fill="#8cc8f0"><rect x="69" y="718" width="26" height="2"/><rect x="132" y="718" width="31" height="2"/><rect x="167" y="718" width="27" height="2"/><rect x="200" y="718" width="26.500" height="2"/><rect x="233" y="718" width="26" height="2"/><rect x="265.500" y="718" width="26.500" height="2"/><rect x="298" y="718" width="27" height="2"/></g>
 <!-- weather -->
 <circle cx="1035" cy="706" r="6.500" fill="#f5a02a"/><circle cx="1035" cy="706" r="4" fill="#f8b84a"/><path d="M1035.500 711.500a2.500 2.500 0 0 1 .3-5a3.400 3.400 0 0 1 6.400-.3a2.700 2.700 0 0 1 .3 5.300z" fill="#e4e8ee"/>
 <!-- tray -->
 <path d="M1150 709l4-4 4 4" fill="none" stroke="#eef0f2" stroke-width="1.200"/>
 <rect x="1167" y="703.500" width="8.500" height="6" fill="none" stroke="#e4e6ea" stroke-width="1"/><path d="M1165 704.500v7M1164 711.500h5" stroke="#e4e6ea" stroke-width="1"/><path d="M1170 708.500l2 2m0-2l-2 2" stroke="#e4e6ea" stroke-width=".7"/>
 <path d="M1253 702h9.500v7h-6.500l-3 2.500z" fill="#eef0f2"/><path d="M1255 704.200h5.500M1255 706.400h5.500" stroke="#1c2940" stroke-width=".8"/>
 <circle cx="1264" cy="711.300" r="3.800" fill="#1c2537" stroke="#dfe2e7" stroke-width=".9"/>
</svg>
<div class="t" style="left:77.300px;top:701.500px;font-size:8px;font-weight:bold;color:#fff;">x</div>
<div class="t" style="left:143.800px;top:699px;font-size:10.500px;font-weight:bold;color:#fff;">A</div>
<div class="t" style="left:144.200px;top:708.800px;font-size:3.800px;line-height:6px;height:6px;font-weight:bold;color:#fff;">CAD</div>
<div class="t" style="left:279.800px;top:706.800px;font-size:5.500px;line-height:8px;height:8px;font-weight:bold;color:#fff;">5+</div>
<div class="t" style="left:306.500px;top:699.500px;font-size:10px;font-weight:bold;color:#fff;">G</div>
<div class="t" style="left:306.800px;top:708.800px;font-size:3.800px;line-height:6px;height:6px;font-weight:bold;color:#fff;">PDF</div>
<div class="t" style="transform-origin:0 50%;transform:scaleX(0.867);left:1050px;top:702px;font-size:9.500px;line-height:11px;height:11px;color:#eceef1;">36°C</div>
<div class="t" style="transform-origin:0 50%;transform:scaleX(0.945);left:1075px;top:702px;font-size:9.500px;line-height:11px;height:11px;color:#eceef1;">Nắng nhiều nơi</div>
<div class="t" style="transform-origin:0 50%;transform:scaleX(0.814);left:1182px;top:701.500px;font-size:8.500px;color:#eceef1;">ENG</div>
<div class="t" style="transform-origin:0 50%;transform:scaleX(0.897);left:1209px;top:695.500px;font-size:8.500px;color:#eceef1;">4:00 PM</div>
<div class="t" style="transform-origin:0 50%;transform:scaleX(0.912);left:1206px;top:707.500px;font-size:8.500px;color:#eceef1;">4/12/2024</div>
<div class="t" style="left:1262.700px;top:707.800px;font-size:5.500px;line-height:7px;height:7px;color:#fff;">1</div>
</body>
</html>
